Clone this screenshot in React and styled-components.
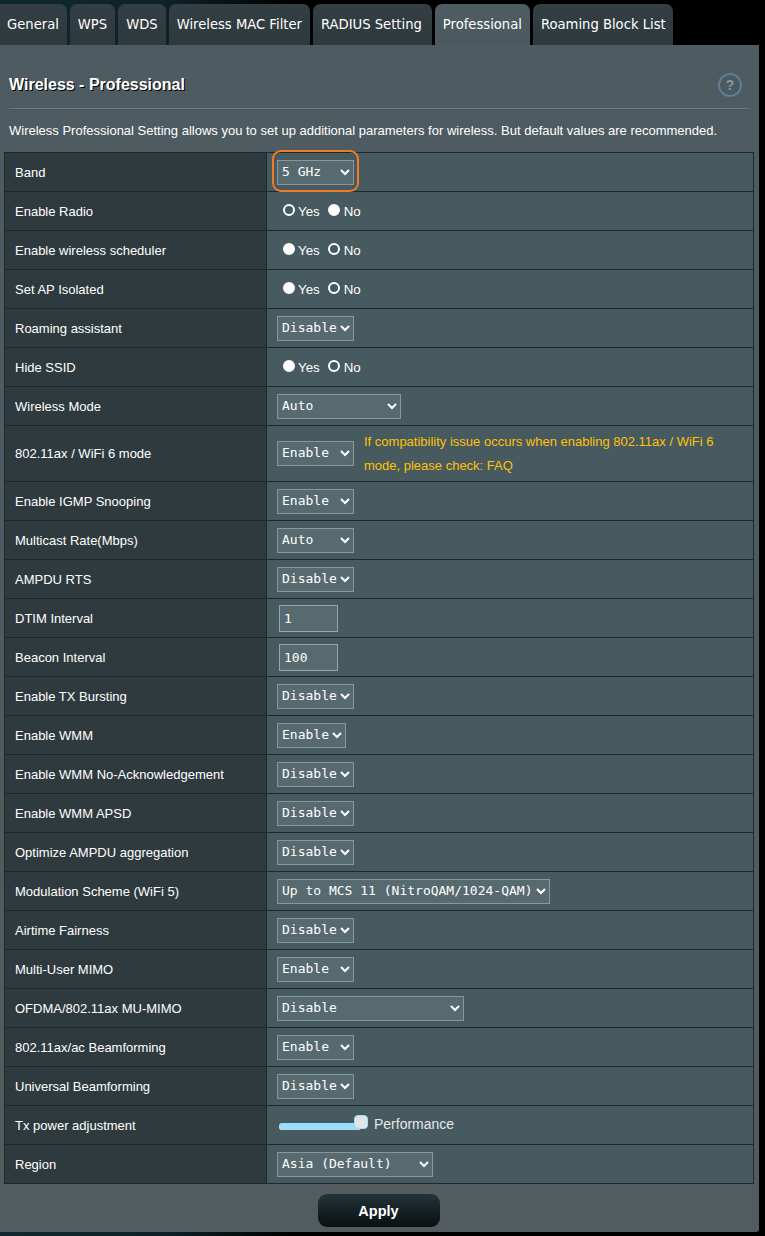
import React from "react";
import styled, { createGlobalStyle } from "styled-components";

const Global = createGlobalStyle`
  html, body { margin: 0; padding: 0; background: #000; }
  body { font-family: "Liberation Sans", Arial, sans-serif; color: #fff; }
`;
const Page = styled.div`
  width: 765px;
  height: 1236px;
  overflow: hidden;
  background: linear-gradient(90deg, #10282d 0, #0e2226 22%, #000 38%);
`;
const TabBar = styled.nav`
  display: flex;
  gap: 3px;
  margin-left: -1px;
  padding-top: 4px;
  height: 41px;
`;
const Tab = styled.div`
  display: flex;
  align-items: center;
  height: 41px;
  padding: 0 ${(p) => p.$padRight}px 0 8px;
  border-radius: 7px 7px 0 0;
  font-family: "DejaVu Sans", Verdana, sans-serif;
  font-size: 13.17px;
  white-space: nowrap;
  color: #fff;
  background: ${(p) =>
    p.$active
      ? "linear-gradient(180deg, #4f5c62, #4c595e)"
      : "linear-gradient(180deg, #333f44, #2e393d)"};
  &:first-child { border-top-left-radius: 0; }
`;
const Panel = styled.main`
  width: 759px;
  height: 1187px;
  box-sizing: border-box;
  padding: 0 5px 0 4px;
  border-bottom-right-radius: 3px;
  background: linear-gradient(180deg, #4e5b61 0, #4d5a5f 30%, #525c5f 100%);
`;
const TitleRow = styled.header`
  display: flex;
  align-items: center;
  justify-content: space-between;
  height: 63px;
  margin: 0 5px 0 5px;
  padding: 0 7px 0 0;
  border-bottom: 1px solid #6b7a7f;
  box-shadow: 0 1px 0 #46545a;
`;
const Title = styled.h1`
  margin: 16px 0 0;
  font-size: 16px;
  font-weight: bold;
  color: #fff;
  text-shadow: 1px 1px 0 #000;
`;
const Help = styled.span`
  display: flex;
  align-items: center;
  justify-content: center;
  width: 20px;
  height: 20px;
  margin-top: 17px;
  border: 2px solid #617d93;
  border-radius: 50%;
  background: #4a5a63;
  font-size: 14px;
  font-weight: bold;
  color: #8a97a0;
`;
const Description = styled.p`
  height: 43px;
  margin: 0 0 0 5px;
  font-size: 13px;
  line-height: 43px;
  white-space: nowrap;
  color: #fff;
`;
const Table = styled.section`
  width: 750px;
  box-sizing: border-box;
  border: 1px solid #1f282b;
  border-bottom-width: 0;
`;
const Row = styled.div`
  display: grid;
  grid-template-columns: 262px 1fr;
  height: ${(p) => (p.$tall ? 56 : 39)}px;
  box-sizing: border-box;
  border-bottom: 1px solid #1f282b;
`;
const Label = styled.div`
  display: flex;
  align-items: center;
  padding-left: 10px;
  padding-top: ${(p) => (p.$tall ? 0 : 1)}px;
  border-right: 1px solid #1f282b;
  font-size: 13px;
  color: #fff;
  background: #2f3a3e;
`;
const Value = styled.div`
  display: flex;
  align-items: center;
  padding-left: 10px;
  background: #475a5f;
`;
const Select = styled.select`
  width: ${(p) => p.$w}px;
  height: 25px;
  box-sizing: border-box;
  padding: 0 0 2px;
  border: 1px solid #8b9699;
  border-radius: 0;
  font-family: "DejaVu Sans Mono", monospace;
  font-size: 13px;
  color: #fff;
  background: #576a70;
`;
const Highlight = styled.span`
  position: relative;
  display: inline-flex;
  &::after {
    content: "";
    position: absolute;
    inset: -10px -5px -7px -5px;
    border: 2px solid #f07a28;
    border-radius: 9px;
    pointer-events: none;
  }
`;
const Radios = styled.div`
  display: flex;
  align-items: center;
  padding-left: 6px;
  padding-top: 1px;
  font-size: 13.3px;
`;
const RadioLabel = styled.label`
  display: flex;
  align-items: center;
  gap: ${(p) => p.$gap}px;
  margin-right: 8px;
`;
const Radio = styled.input.attrs({ type: "radio" })`
  appearance: none;
  width: 12px;
  height: 12px;
  margin: -4px 0 0;
  box-sizing: border-box;
  border-radius: 50%;
  border: 2px solid #fff;
  background: #fff;
  &:checked { background: #475a5f; }
`;
const NumberInput = styled.input`
  width: 59px;
  height: 27px;
  box-sizing: border-box;
  margin-left: 2px;
  padding: 0 0 0 4px;
  border: 1px solid #99a5a8;
  border-radius: 0;
  font-family: "DejaVu Sans Mono", monospace;
  font-size: 13px;
  color: #fff;
  background: #566a70;
`;
const Note = styled.div`
  width: 370px;
  margin-left: 10px;
  font-size: 13px;
  line-height: 24px;
  color: #ffc107;
`;
const FaqLink = styled.a`
  color: #ffc107;
`;
const SliderWrap = styled.div`
  display: flex;
  align-items: center;
  gap: 13px;
  margin-left: 2px;
  padding-bottom: 2px;
  font-size: 14px;
  color: #e4e8e9;
`;
const Track = styled.div`
  position: relative;
  width: 82px;
  height: 7px;
  margin-top: 4px;
  border-radius: 4px;
  background: #93e1ff;
  box-shadow: inset 0 -1px 0 #c9d4d7, inset 1px 0 0 #c9d4d7;
`;
const Thumb = styled.div`
  position: absolute;
  right: -7px;
  top: -8px;
  width: 14px;
  height: 14px;
  box-sizing: border-box;
  border: 1px solid #93e1ff;
  border-radius: 4px;
  background: #e2e4e5;
`;
const Actions = styled.div`
  display: flex;
  justify-content: center;
  padding: 10px 1px 0 0;
`;
const Apply = styled.button`
  width: 122px;
  height: 33px;
  border: 0;
  border-radius: 9px;
  font-family: "Liberation Sans", Arial, sans-serif;
  font-size: 14.5px;
  font-weight: bold;
  color: #fff;
  background: linear-gradient(180deg, #22343a, #0b0f11);
`;

const sel = (w, value, options) => ({ kind: "select", w, value, options: options || [value] });
const yn = (yes) => ({ kind: "radio", yes });
const ed = ["Enable", "Disable"];
const rows = [
  ["Band", { ...sel(77, "5 GHz", ["2.4 GHz", "5 GHz"]), hl: true }],
  ["Enable Radio", yn(true)],
  ["Enable wireless scheduler", yn(false)],
  ["Set AP Isolated", yn(false)],
  ["Roaming assistant", sel(77, "Disable", ed)],
  ["Hide SSID", yn(false)],
  ["Wireless Mode", sel(124, "Auto")],
  ["802.11ax / WiFi 6 mode", { ...sel(77, "Enable", ed), note: true }],
  ["Enable IGMP Snooping", sel(77, "Enable", ed)],
  ["Multicast Rate(Mbps)", sel(77, "Auto")],
  ["AMPDU RTS", sel(77, "Disable", ed)],
  ["DTIM Interval", { kind: "input", value: "1" }],
  ["Beacon Interval", { kind: "input", value: "100" }],
  ["Enable TX Bursting", sel(77, "Disable", ed)],
  ["Enable WMM", sel(69, "Enable", ed)],
  ["Enable WMM No-Acknowledgement", sel(77, "Disable", ed)],
  ["Enable WMM APSD", sel(77, "Disable", ed)],
  ["Optimize AMPDU aggregation", sel(77, "Disable", ed)],
  ["Modulation Scheme (WiFi 5)", sel(273, "Up to MCS 11 (NitroQAM/1024-QAM)")],
  ["Airtime Fairness", sel(77, "Disable", ed)],
  ["Multi-User MIMO", sel(77, "Enable", ed)],
  ["OFDMA/802.11ax MU-MIMO", sel(187, "Disable")],
  ["802.11ax/ac Beamforming", sel(77, "Enable", ed)],
  ["Universal Beamforming", sel(77, "Disable", ed)],
  ["Tx power adjustment", { kind: "slider" }],
  ["Region", sel(156, "Asia (Default)")],
];
const tabs = [
  ["General", 8],
  ["WPS", 8],
  ["WDS", 8],
  ["Wireless MAC Filter", 8],
  ["RADIUS Setting", 10],
  ["Professional", 8],
  ["Roaming Block List", 7],
];

function Control({ c, name }) {
  if (c.kind === "radio") {
    return (
      <Radios>
        <RadioLabel $gap={3}><Radio name={name} defaultChecked={c.yes} />Yes</RadioLabel>
        <RadioLabel $gap={4}><Radio name={name} defaultChecked={!c.yes} />No</RadioLabel>
      </Radios>
    );
  }
  if (c.kind === "input") return <NumberInput defaultValue={c.value} />;
  if (c.kind === "slider") {
    return (
      <SliderWrap>
        <Track><Thumb /></Track>
        Performance
      </SliderWrap>
    );
  }
  const select = (
    <Select $w={c.w} defaultValue={c.value}>
      {c.options.map((o) => <option key={o}>{o}</option>)}
    </Select>
  );
  return (
    <>
      {c.hl ? <Highlight>{select}</Highlight> : select}
      {c.note && (
        <Note>
          If compatibility issue occurs when enabling 802.11ax / WiFi 6 mode, please check: <FaqLink>FAQ</FaqLink>
        </Note>
      )}
    </>
  );
}

export default function App() {
  return (
    <Page>
      <Global />
      <TabBar>
        {tabs.map(([t, pad]) => <Tab key={t} $padRight={pad} $active={t === "Professional"}>{t}</Tab>)}
      </TabBar>
      <Panel>
        <TitleRow>
          <Title>Wireless - Professional</Title>
          <Help>?</Help>
        </TitleRow>
        <Description>
          Wireless Professional Setting allows you to set up additional parameters for wireless. But default values are recommended.
        </Description>
        <Table>
          {rows.map(([label, c]) => (
            <Row key={label} $tall={c.note}>
              <Label $tall={c.note}>{label}</Label>
              <Value><Control c={c} name={label} /></Value>
            </Row>
          ))}
        </Table>
        <Actions><Apply>Apply</Apply></Actions>
      </Panel>
    </Page>
  );
}
